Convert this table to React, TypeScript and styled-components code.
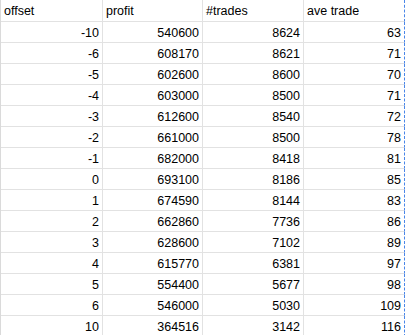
import styled, { createGlobalStyle } from "styled-components";

const GlobalStyle = createGlobalStyle`
  html, body {
    margin: 0;
    padding: 0;
    background: #ffffff;
  }
`;

const rows: [number, number, number, number][] = [
  [-10, 540600, 8624, 63],
  [-6, 608170, 8621, 71],
  [-5, 602600, 8600, 70],
  [-4, 603000, 8500, 71],
  [-3, 612600, 8540, 72],
  [-2, 661000, 8500, 78],
  [-1, 682000, 8418, 81],
  [0, 693100, 8186, 85],
  [1, 674590, 8144, 83],
  [2, 662860, 7736, 86],
  [3, 628600, 7102, 89],
  [4, 615770, 6381, 97],
  [5, 554400, 5677, 98],
  [6, 546000, 5030, 109],
  [10, 364516, 3142, 116],
];

const headers = ["offset", "profit", "#trades", "ave trade"];

const Sheet = styled.div`
  display: grid;
  grid-template-columns: 102px 100px 101px 101px;
  grid-auto-rows: 21px;
  grid-template-rows: 22px;
  border-left: 1px solid #dadada;
  width: 404px;
  height: 335px;
  overflow: hidden;
  font-family: "Liberation Sans", Arial, sans-serif;
  font-size: 12.5px;
  color: #000;
`;

const Cell = styled.div<{ $header?: boolean; $last?: boolean }>`
  box-sizing: border-box;
  display: flex;
  align-items: center;
  justify-content: ${(p) => (p.$header ? "flex-start" : "flex-end")};
  padding: ${(p) => (p.$header ? "1px 3px 0 3px" : "1px 3px 0 3px")};
  border-bottom: 1px solid #e2e2e2;
  border-right: ${(p) => (p.$last ? "1px dashed #4a86e8" : "1px solid #e2e2e2")};
  white-space: nowrap;
`;

export default function App() {
  return (
    <>
      <GlobalStyle />
      <Sheet>
        {headers.map((h, i) => (
          <Cell key={h} $header $last={i === 3}>
            {h}
          </Cell>
        ))}
        {rows.map((r, ri) =>
          r.map((v, ci) => (
            <Cell key={`${ri}-${ci}`} $last={ci === 3}>
              {v}
            </Cell>
          ))
        )}
      </Sheet>
    </>
  );
}
